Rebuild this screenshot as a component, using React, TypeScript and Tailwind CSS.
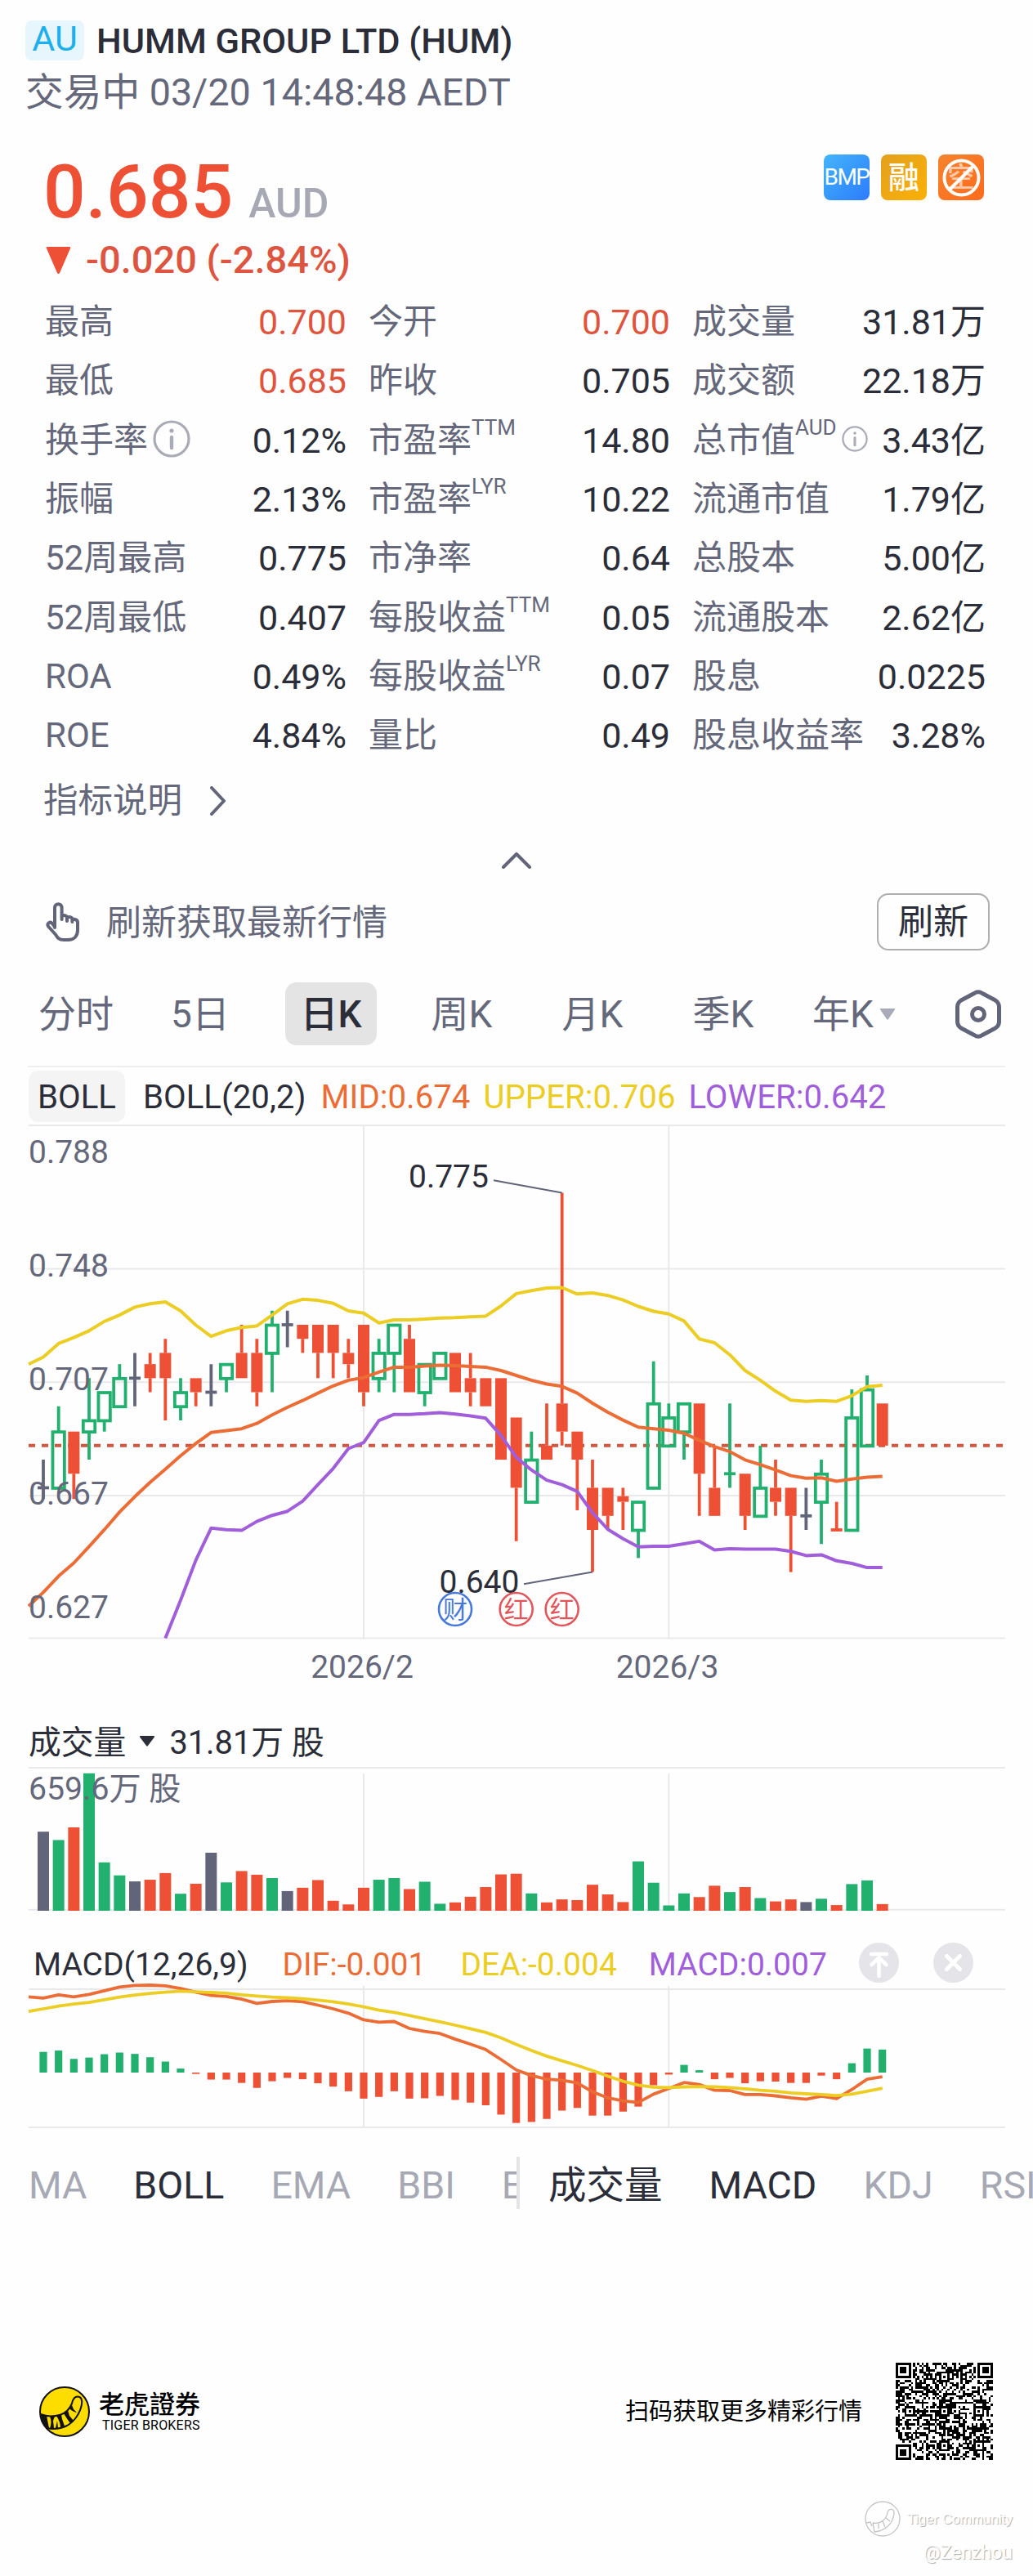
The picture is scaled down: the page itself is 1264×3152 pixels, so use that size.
import React from 'react';
import clsx from 'clsx';

const RED = '#ee5035';
const GREEN = '#22b06e';
const SLATE = '#62657a';
const ORANGE = '#ec6c36';
const YELLOW = '#eccd24';
const PURPLE = '#a15edb';
const GRID = '#e9e9eb';

type Stat = { label: string; value: string; sup?: string; info?: 'lg' | 'sm'; down?: boolean };

const stats: Stat[] = [
  { label: '最高', value: '0.700', down: true },
  { label: '今开', value: '0.700', down: true },
  { label: '成交量', value: '31.81万' },
  { label: '最低', value: '0.685', down: true },
  { label: '昨收', value: '0.705' },
  { label: '成交额', value: '22.18万' },
  { label: '换手率', value: '0.12%', info: 'lg' },
  { label: '市盈率', value: '14.80', sup: 'TTM' },
  { label: '总市值', value: '3.43亿', sup: 'AUD', info: 'sm' },
  { label: '振幅', value: '2.13%' },
  { label: '市盈率', value: '10.22', sup: 'LYR' },
  { label: '流通市值', value: '1.79亿' },
  { label: '52周最高', value: '0.775' },
  { label: '市净率', value: '0.64' },
  { label: '总股本', value: '5.00亿' },
  { label: '52周最低', value: '0.407' },
  { label: '每股收益', value: '0.05', sup: 'TTM' },
  { label: '流通股本', value: '2.62亿' },
  { label: 'ROA', value: '0.49%' },
  { label: '每股收益', value: '0.07', sup: 'LYR' },
  { label: '股息', value: '0.0225' },
  { label: 'ROE', value: '4.84%' },
  { label: '量比', value: '0.49' },
  { label: '股息收益率', value: '3.28%' },
];

// open, high, low, close
const candles = [
  [0.67, 0.68, 0.666, 0.67], [0.67, 0.699, 0.67, 0.69], [0.69, 0.69, 0.666, 0.675], [0.69, 0.709, 0.68, 0.694],
  [0.694, 0.704, 0.69, 0.704], [0.699, 0.714, 0.699, 0.709], [0.709, 0.718, 0.699, 0.709], [0.714, 0.718, 0.704, 0.709],
  [0.718, 0.723, 0.694, 0.709], [0.699, 0.709, 0.694, 0.704], [0.709, 0.709, 0.699, 0.704], [0.704, 0.714, 0.699, 0.704],
  [0.709, 0.714, 0.704, 0.714], [0.718, 0.728, 0.709, 0.709], [0.718, 0.723, 0.699, 0.704], [0.718, 0.733, 0.704, 0.728],
  [0.728, 0.733, 0.72, 0.728], [0.728, 0.728, 0.718, 0.723], [0.728, 0.728, 0.709, 0.718], [0.728, 0.728, 0.709, 0.718],
  [0.718, 0.723, 0.709, 0.714], [0.728, 0.728, 0.699, 0.704], [0.709, 0.723, 0.704, 0.718], [0.718, 0.728, 0.704, 0.728],
  [0.723, 0.728, 0.704, 0.704], [0.704, 0.714, 0.699, 0.714], [0.709, 0.718, 0.709, 0.718], [0.718, 0.718, 0.704, 0.704],
  [0.709, 0.718, 0.699, 0.704], [0.709, 0.709, 0.699, 0.699], [0.709, 0.709, 0.68, 0.68], [0.695, 0.695, 0.651, 0.67],
  [0.665, 0.69, 0.665, 0.68], [0.685, 0.7, 0.68, 0.68], [0.7, 0.775, 0.685, 0.69], [0.69, 0.69, 0.662, 0.68],
  [0.67, 0.68, 0.64, 0.655], [0.67, 0.67, 0.655, 0.66], [0.667, 0.67, 0.655, 0.665], [0.655, 0.665, 0.645, 0.665],
  [0.67, 0.715, 0.67, 0.7], [0.685, 0.7, 0.685, 0.695], [0.69, 0.7, 0.68, 0.7], [0.7, 0.7, 0.66, 0.675],
  [0.67, 0.685, 0.66, 0.66], [0.675, 0.7, 0.67, 0.675], [0.675, 0.675, 0.655, 0.66], [0.66, 0.685, 0.66, 0.67],
  [0.67, 0.68, 0.66, 0.665], [0.67, 0.67, 0.64, 0.66], [0.66, 0.67, 0.655, 0.66], [0.665, 0.68, 0.65, 0.675],
  [0.655, 0.665, 0.655, 0.655], [0.655, 0.705, 0.655, 0.695], [0.685, 0.71, 0.685, 0.705], [0.7, 0.7, 0.685, 0.685],
];

// Line samples, one per candle, starting one step before the first one
const upper = [
  717, 698, 662, 646, 628, 603, 586, 565, 556, 551, 575, 613, 643, 628, 619, 615, 586, 556, 544, 547, 555, 575, 581, 607,
  599, 599, 597, 594, 593, 591, 589, 562, 529, 521, 514, 513, 530, 527, 534, 546, 563, 576, 583, 602, 650, 660, 692, 734,
  760, 789, 813, 816, 814, 816, 801, 777, 773,
];
const mid = [
  1362, 1325, 1282, 1247, 1203, 1158, 1111, 1070, 1032, 997, 961, 928, 899, 894, 889, 875, 852, 832, 814, 794, 775, 760,
  753, 738, 725, 725, 722, 720, 721, 723, 725, 734, 747, 760, 770, 776, 794, 821, 845, 866, 885, 889, 893, 901, 920, 937,
  950, 972, 985, 999, 1014, 1021, 1020, 1029, 1023, 1018, 1016,
];
const lower = [
  1447, 1346, 1239, 1154, 1158, 1160, 1136, 1120, 1109, 1082, 1038, 995, 942, 926, 867, 851, 851, 849, 846, 850, 855, 861,
  907, 965, 999, 1026, 1038, 1056, 1113, 1157, 1182, 1204, 1202, 1202, 1196, 1189, 1212, 1209, 1210, 1210, 1210, 1216,
  1227, 1225, 1241, 1248, 1259, 1259,
];
const volumes = [
  237, 212, 250, 412, 145, 106, 88, 93, 113, 51, 81, 174, 85, 119, 108, 98, 59, 69, 92, 30, 19, 69, 93, 98, 65, 87, 21, 25,
  42, 71, 109, 111, 52, 25, 34, 32, 78, 49, 26, 148, 84, 16, 52, 41, 75, 56, 71, 38, 28, 34, 26, 36, 17, 80, 91, 20,
];
const macd = [
  62, 66, 41, 45, 55, 60, 56, 46, 33, 12, -4, -21, -21, -31, -46, -26, -16, -20, -32, -42, -56, -78, -73, -56, -78, -77,
  -70, -82, -90, -98, -126, -151, -148, -139, -114, -106, -129, -129, -117, -102, -38, -6, 23, 7, -20, -16, -32, -26, -27,
  -31, -31, -9, -20, 28, 72, 69,
];
const dif = [
  890, 894, 884, 890, 883, 872, 861, 856, 855, 857, 865, 876, 886, 889, 897, 910, 904, 902, 905, 915, 926, 939, 959, 966,
  964, 985, 994, 1000, 1017, 1032, 1048, 1078, 1109, 1126, 1137, 1140, 1148, 1175, 1193, 1202, 1207, 1182, 1165, 1147,
  1153, 1170, 1171, 1183, 1183, 1187, 1193, 1197, 1188, 1195, 1168, 1137, 1130,
];
const dea = [
  934, 926, 918, 912, 907, 899, 891, 885, 880, 876, 873, 875, 877, 879, 884, 888, 891, 893, 896, 900, 905, 912, 920, 930,
  937, 946, 956, 965, 975, 986, 997, 1013, 1033, 1051, 1068, 1082, 1096, 1111, 1128, 1143, 1155, 1161, 1162, 1160, 1159,
  1160, 1162, 1166, 1170, 1173, 1178, 1181, 1183, 1186, 1182, 1173, 1164,
];

const xAt = (i: number) => 53 + i * 18.667;
const priceY = (p: number) => 83.4 + (0.775 - p) * 3438.5;
const bollY = (v: number) => v / 2.178 - 36;
const macdY = (v: number) => v / 2.45 - 354;

const candleColor = (i: number) => {
  const [open, , , close] = candles[i];
  if (close > open) return GREEN;
  if (close < open) return RED;
  const prev = i > 0 ? candles[i - 1][3] : close;
  return close > prev ? GREEN : close < prev ? RED : SLATE;
};

const points = (data: number[], first: number, toY: (v: number) => number) =>
  data.map((v, i) => `${Math.max(35, xAt(first + i)).toFixed(1)},${toY(v).toFixed(1)}`).join(' ');

const InfoIcon = ({ className }: { className: string }) => (
  <svg viewBox="0 0 46 46" className={className} fill="none" stroke="#a9abb6">
    <circle cx="23" cy="23" r="21" strokeWidth="3.2" />
    <path d="M23 21v13" strokeWidth="4.4" strokeLinecap="round" />
    <circle cx="23" cy="13" r="2.6" fill="#a9abb6" stroke="none" />
  </svg>
);

const StatCell = ({ stat }: { stat: Stat }) => (
  <div className="flex h-[72.3px] items-center justify-between whitespace-nowrap">
    <div className="flex items-center text-[42px] leading-[50px] text-[#65687a]">
      <span>{stat.label}</span>
      {stat.sup && <span className="mb-[32px] text-[26px] leading-[30px]">{stat.sup}</span>}
      {stat.info === 'lg' && <InfoIcon className="-mt-1 ml-1.5 size-[46px]" />}
      {stat.info === 'sm' && <InfoIcon className="-mt-1 ml-1.5 size-8" />}
    </div>
    <span className={clsx('text-[43px] leading-[50px]', stat.down ? 'text-[#e0533c]' : 'text-[#2b2d38]')}>{stat.value}</span>
  </div>
);

const Badges = () => (
  <div className="flex gap-3.5">
    <div className="flex size-14 items-center justify-center rounded-lg bg-gradient-to-br from-[#45b4fb] to-[#2f7bfb] text-[28px] tracking-[-1.500px] text-white">
      BMP
    </div>
    <div className="flex size-14 items-center justify-center rounded-lg bg-gradient-to-br from-[#e3a11c] to-[#fbb003] text-[38px] leading-none font-medium text-white">
      融
    </div>
    <div className="relative flex size-14 items-center justify-center rounded-lg bg-gradient-to-br from-[#f5832d] to-[#fd6a1b] text-[34px] leading-none font-medium text-white/60">
      空
      <svg viewBox="0 0 56 56" className="absolute inset-0" fill="none" stroke="#fff" strokeWidth="4">
        <circle cx="28.5" cy="28.5" r="21" />
        <path d="M43 14L14 43" />
      </svg>
    </div>
  </div>
);

const PriceChart = () => (
  <svg width="1264" height="694" viewBox="0 0 1264 694" className="block">
    <g stroke={GRID} strokeWidth="2">
      {[1, 176.6, 315.2, 453.9, 628.5].map((y) => (
        <path key={y} d={`M35 ${y}H1230`} />
      ))}
      <path d="M445 1V628M818.3 1V628" />
    </g>
    <path d="M35 392.8H1230" stroke="#cf5640" strokeWidth="4" strokeDasharray="8 8" />
    {candles.map(([open, high, low, close], i) => {
      const x = xAt(i);
      const color = candleColor(i);
      const top = priceY(Math.max(open, close));
      const bottom = priceY(Math.min(open, close));
      return (
        <g key={i} stroke={color} strokeWidth="3.8">
          <path d={`M${x} ${priceY(high)}V${top}M${x} ${bottom}V${priceY(low)}`} />
          {close > open && <rect x={x - 7.2} y={top + 0.5} width="14.4" height={bottom - top} fill="none" strokeWidth="3.8" />}
          {close < open && <rect x={x - 7} y={top} width="14" height={bottom - top} fill={color} stroke="none" />}
          {close === open && <path d={`M${x - 7} ${top}h14`} />}
        </g>
      );
    })}
    <g fill="none" strokeWidth="4" strokeLinejoin="round">
      <polyline points={points(upper, -1, bollY)} stroke={YELLOW} />
      <polyline points={points(mid, -1, bollY)} stroke={ORANGE} />
      <polyline points={points(lower, 8, bollY)} stroke={PURPLE} />
    </g>
    <g fontSize="39" fill="#65687a">
      <text x="35" y="46.6">0.788</text>
      <text x="35" y="185.8">0.748</text>
      <text x="35" y="325.3">0.707</text>
      <text x="35" y="464.5">0.667</text>
      <text x="35" y="603.6">0.627</text>
      <text x="443" y="676.6" textAnchor="middle">2026/2</text>
      <text x="816.500" y="676.6" textAnchor="middle">2026/3</text>
    </g>
    <g fontSize="39" fill="#2b2d38">
      <text x="500" y="77.4">0.775</text>
      <text x="537.500" y="573.3">0.640</text>
    </g>
    <path d="M604 68.2L687.7 83.4M641 562.3L725 547.6" stroke="#62657a" strokeWidth="2" />
    {[
      { i: 27, label: '财', color: '#4678dc' },
      { i: 31, label: '红', color: '#e2555b' },
      { i: 34, label: '红', color: '#e2555b' },
    ].map((m) => (
      <g key={m.i}>
        <circle cx={xAt(m.i)} cy="593" r="20" fill="#fefefe" fillOpacity="0.6" stroke={m.color} strokeWidth="2.6" />
        <text x={xAt(m.i)} y="604" fontSize="30" textAnchor="middle" fill={m.color}>{m.label}</text>
      </g>
    ))}
  </svg>
);

const VolumeChart = () => (
  <svg width="1264" height="178" viewBox="0 0 1264 178" className="block">
    <g stroke={GRID} strokeWidth="2">
      <path d="M35 1H1230M35 174.7H1230M445 8V175M818.3 8V175" />
    </g>
    {volumes.map((v, i) => (
      <rect key={i} x={xAt(i) - 7} y={176 - v / 2.45} width="14" height={v / 2.45} fill={candleColor(i)} />
    ))}
    <text x="35" y="39.6" fontSize="39.2" fill="#65687a">659.6万 股</text>
  </svg>
);

const MacdChart = () => (
  <svg width="1264" height="170" viewBox="0 0 1264 170" className="block overflow-visible">
    <path d="M35 0H1230M35 169H1230M445 -4V170M818.3 -4V170" stroke={GRID} strokeWidth="2" />
    {macd.map((v, i) => (
      <rect
        key={i}
        x={xAt(i) - 4.6}
        y={v > 0 ? 102 - v / 2.45 : 102}
        width="9.2"
        height={Math.abs(v) / 2.45}
        fill={v > 0 ? GREEN : RED}
      />
    ))}
    <g fill="none" strokeWidth="3.8" strokeLinejoin="round">
      <polyline points={points(dif, -1, macdY)} stroke={ORANGE} />
      <polyline points={points(dea, -1, macdY)} stroke={YELLOW} />
    </g>
  </svg>
);

const QR_SIZE = 45;

// 0 / 1 inside finder and alignment patterns, undefined for data modules
const qrPattern = (x: number, y: number) => {
  const finders = [[3, 3], [QR_SIZE - 4, 3], [3, QR_SIZE - 4]];
  for (const [cx, cy] of finders) {
    const d = Math.max(Math.abs(x - cx), Math.abs(y - cy));
    if (d <= 4) return d === 3 || d <= 1 ? 1 : 0;
  }
  for (const [cx, cy] of [[22, 6], [6, 22], [22, 22], [38, 22], [22, 38], [38, 38]]) {
    const d = Math.max(Math.abs(x - cx), Math.abs(y - cy));
    if (d <= 2) return d === 1 ? 0 : 1;
  }
  if (x === 6) return (y + 1) % 2;
  if (y === 6) return (x + 1) % 2;
  return undefined;
};

const QrCode = () => {
  let d = '';
  let seed = 359;
  for (let y = 0; y < QR_SIZE; y++) {
    for (let x = 0; x < QR_SIZE; x++) {
      seed = (seed * 1103515245 + 12345) % 2147483648;
      const on = qrPattern(x, y) ?? (seed / 2147483648 > 0.49 ? 1 : 0);
      if (on) d += `M${x} ${y}h1v1h-1z`;
    }
  }
  return (
    <svg viewBox={`0 0 ${QR_SIZE} ${QR_SIZE}`} className="size-[119px]" shapeRendering="crispEdges">
      <path d={d} fill="#000" />
    </svg>
  );
};

const TigerLogo = () => (
  <svg viewBox="0 0 62 62" className="size-[62px]">
    <circle cx="31" cy="31" r="30" fill="#fddc00" stroke="#111" strokeWidth="2" />
    <path
      d="M1.5 34C9 37 18 37 25 35C33 33 37 28 40 21C41 16 43 12.500 47 12.500C51 12.500 53 16 52 22C50 33 43 43 34 48C27 51.500 18 53 9 51"
      fill="none"
      stroke="#111"
      strokeWidth="2"
    />
    <path d="M2 34L9 36L12 51L8 51C4 46 2 41 2 34ZM13 36.500L19 36.500L17 42L18 51L13 51.500C15 46 15 42 13 36.500ZM21 36L27 34.500L28 40L31 48.500L26 50.500C26 45 24 41 21 36ZM22 42L23 51L20 51ZM30 33L35 29.500L37 36L42 42L38 45C35 41 33 38 30 33ZM37 27L40 23L42 28L46 32C42 31 40 30 37 27Z" fill="#111" />
  </svg>
);

const periods = ['分时', '5日', '日K', '周K', '月K', '季K'];

export default function App() {
  return (
    <div className="h-[3152px] w-[1264px] overflow-hidden bg-[#fefefe] font-['Roboto','Noto_Sans_CJK_SC',sans-serif] text-[#2b2d38]">
      <header className="h-[189px] pt-6 pl-[31px]">
        <div className="flex h-[50px] items-center">
          <span className="flex h-[49px] w-[72px] items-center justify-center rounded-lg bg-[#e7f6fd] pb-1 text-[43px] leading-none text-[#1eb0ea]">
            AU
          </span>
          <h1 className="mt-1 ml-[15px] text-[43.300px] leading-none font-medium whitespace-nowrap">HUMM GROUP LTD (HUM)</h1>
        </div>
        <p className="mt-[14px] text-[46.700px] leading-[50px] text-[#65687a]">交易中 03/20 14:48:48 AEDT</p>
      </header>

      <section className="h-[169px] pr-[60px] pl-[53px]">
        <div className="flex items-start justify-between">
          <div className="flex items-baseline leading-[92px]">
            <span className="text-[91px] font-medium text-[#ee5035]">0.685</span>
            <span className="ml-[19px] text-[50px] leading-none font-medium text-[#a6a9b4]">AUD</span>
          </div>
          <Badges />
        </div>
        <div className="mt-[13px] flex items-center text-[47px] leading-[48px] font-medium text-[#dd5540]">
          <svg viewBox="0 0 31 33" className="mr-[18px] ml-[3px] h-[33px] w-[31px]">
            <path d="M2 0H29Q31 0 30 2L17 32Q15.500 34 14 32L1 2Q0 0 2 0Z" fill="#ee5035" />
          </svg>
          -0.020 (-2.84%)
        </div>
      </section>

      <section className="grid grid-cols-[369px_369px_359px] gap-x-[27px] pl-[55px]">
        {stats.map((stat, i) => (
          <StatCell key={i} stat={stat} />
        ))}
      </section>

      <div className="flex h-[87px] items-center pl-[53px] text-[42.500px] leading-none text-[#65687a]">
        指标说明
        <svg viewBox="0 0 20 36" className="ml-[34px] h-9 w-5" fill="none" stroke="#62657a" strokeWidth="4" strokeLinecap="round" strokeLinejoin="round">
          <path d="M2 2L17 18L2 34" />
        </svg>
      </div>
      <div className="flex h-[59px] items-center justify-center">
        <svg viewBox="0 0 36 20" className="h-5 w-9" fill="none" stroke="#62657a" strokeWidth="4" strokeLinecap="round" strokeLinejoin="round">
          <path d="M2 18L18 2L34 18" />
        </svg>
      </div>

      <div className="flex h-[91px] items-center pr-[53px] pl-14">
        <svg viewBox="0 0 41 48" className="h-12 w-[41px]" fill="none" stroke="#62657a" strokeWidth="4" strokeLinecap="round" strokeLinejoin="round">
          <path d="M11 31V6.500a4.300 4.300 0 0 1 8.600 0V21M19.600 17.500c2-2.500 6.400-1.500 6.400 1.500v4M26 19c2-2 6.400-1 6.400 2v3M32.400 21.500c3-1.500 6.600 0 6.600 3V34c0 7-4 12-12 12h-5c-6 0-8-3-10-6.500L3 29.500c-2-4 2.500-6.500 5-3.500l3 4" />
        </svg>
        <span className="mt-[3px] ml-[33px] text-[43px] leading-none text-[#65687a]">刷新获取最新行情</span>
        <button className="ml-auto h-[70px] w-[138px] rounded-[14px] border-2 border-[#aeaeb3] pt-0.5 text-[43px] leading-none">刷新</button>
      </div>

      <nav className="mx-[34px] flex h-[133px] items-center border-b-2 border-[#eeeeef] pt-1 text-[46px] leading-none text-[#65687a]">
        <div className="-ml-[5px] flex gap-12">
          {periods.map((p) => (
            <span
              key={p}
              className={clsx(
                'flex h-[77px] w-28 items-center justify-center whitespace-nowrap',
                p === '日K' && 'rounded-[14px] bg-[#e4e4e5] font-medium text-[#2b2d38]',
                p === '分时' && 'pl-4',
              )}
            >
              {p}
            </span>
          ))}
        </div>
        <span className="ml-[53px]">年K</span>
        <svg viewBox="0 0 18 14" className="ml-2 h-3.5 w-[18px]">
          <path d="M1 0H17Q19 0 17.500 2L10 13Q9 14.500 8 13L0.500 2Q-1 0 1 0Z" fill="#a9abb6" />
        </svg>
        <svg viewBox="0 0 56 60" className="mr-[5px] ml-auto h-[60px] w-14" fill="none" stroke="#62657a" strokeWidth="5" strokeLinejoin="round">
          <path d="M23 4.500Q28 1 33 4.500L49 13Q53.500 16 53.500 21V39Q53.500 44 49 47L33 55.500Q28 59 23 55.500L7 47Q2.500 44 2.500 39V21Q2.500 16 7 13Z" />
          <circle cx="28" cy="30" r="7.500" />
        </svg>
      </nav>

      <div className="flex h-[70px] items-center pl-[35px] text-[40.200px] leading-none whitespace-nowrap">
        <span className="flex h-[63px] w-[118px] items-center justify-center rounded-xl bg-[#f4f4f5] pt-[3px]">BOLL</span>
        <div className="flex pt-[3px]">
          <span className="ml-[22px]">BOLL(20,2)</span>
          <span className="ml-[18px] text-[#ec6c36]">MID:0.674</span>
          <span className="ml-[16px] text-[#eccd24]">UPPER:0.706</span>
          <span className="ml-[16px] text-[#a15edb]">LOWER:0.642</span>
        </div>
      </div>

      <PriceChart />

      <div className="mt-[31px] flex h-[61px] items-center pt-[3px] pl-[35px] text-[39.800px] leading-none">
        成交量
        <svg viewBox="0 0 18 13" className="mr-[18px] ml-[17px] -mt-1.5 h-[13px] w-[18px]">
          <path d="M1 0H17Q19 0 17.500 2L10 12Q9 13.500 8 12L0.500 2Q-1 0 1 0Z" fill="#2b2d38" />
        </svg>
        31.81万 股
      </div>
      <VolumeChart />

      <div className="flex h-[94px] items-center pt-7 pl-[41px] text-[39px] leading-none whitespace-nowrap">
        <div className="flex pt-1.5">
          <span>MACD(12,26,9)</span>
          <span className="ml-[42px] text-[#ec6c36]">DIF:-0.001</span>
          <span className="ml-[42px] text-[#eccd24]">DEA:-0.004</span>
          <span className="ml-[39px] text-[#a15edb]">MACD:0.007</span>
        </div>
        <svg viewBox="0 0 49 49" className="ml-[39px] size-[49px]" fill="none" stroke="#fff" strokeWidth="4.500" strokeLinecap="round" strokeLinejoin="round">
          <circle cx="24.500" cy="24.500" r="24.500" fill="#e4e4e9" stroke="none" />
          <path d="M15 14H34M24.500 41V19M15.500 27L24.500 18.500L33.500 27" />
        </svg>
        <svg viewBox="0 0 49 49" className="ml-[42px] size-[49px]" fill="none" stroke="#fff" strokeWidth="5" strokeLinecap="round">
          <circle cx="24.500" cy="24.500" r="24.500" fill="#e4e4e9" stroke="none" />
          <path d="M16.500 16.500L32.500 32.500M32.500 16.500L16.500 32.500" />
        </svg>
      </div>
      <MacdChart />

      <div className="mt-[35px] flex h-[64px] items-center text-[46.500px] leading-none whitespace-nowrap text-[#a6a9b4]">
        <div className="flex h-full w-[636px] items-center gap-[57px] overflow-hidden border-r-4 border-[#e4e4e6] pt-[5px] pl-[35px]">
          <span>MA</span>
          <span className="text-[#2b2d38]">BOLL</span>
          <span>EMA</span>
          <span>BBI</span>
          <span>ENE</span>
        </div>
        <div className="flex h-full flex-1 items-center gap-[57px] overflow-hidden pt-[5px] pl-[35px]">
          <span className="text-[#2b2d38]">成交量</span>
          <span className="text-[#2b2d38]">MACD</span>
          <span>KDJ</span>
          <span>RSI</span>
        </div>
      </div>

      <footer className="mt-[188px] flex h-[119px] items-center pr-[49px] pl-12 text-black">
        <TigerLogo />
        <div className="ml-[11px]">
          <p className="font-['Noto_Sans_CJK_TC',sans-serif] text-[31px] leading-[34px] font-medium">老虎證券</p>
          <p className="pl-[4px] text-[16px] leading-[22px] tracking-[0.200px]">TIGER BROKERS</p>
        </div>
        <p className="mt-0.5 mr-[41px] ml-auto text-[29px] leading-none">扫码获取更多精彩行情</p>
        <QrCode />
      </footer>

      <div className="mt-[50px] flex flex-col items-end pr-[25px] text-white [text-shadow:1px_1px_1px_#aaa]">
        <div className="flex items-center font-['Liberation_Sans',sans-serif] text-[17px] leading-none">
          <svg viewBox="0 0 44 44" className="mr-2 size-11" fill="none" stroke="#c4c4c4" strokeWidth="1.300">
            <circle cx="22" cy="22" r="21" />
            <path d="M2 27L7 26L9 31M10 27C20 29 27 22 28 14C30 9 36 9 36 15C35 28 25 37 12 38L10 27M17 28V34M22 25L25 32M26 21L31 25" />
          </svg>
          Tiger Community
        </div>
        <p className="mt-1.5 text-[23px] leading-7">@Zenzhou</p>
      </div>
    </div>
  );
}
